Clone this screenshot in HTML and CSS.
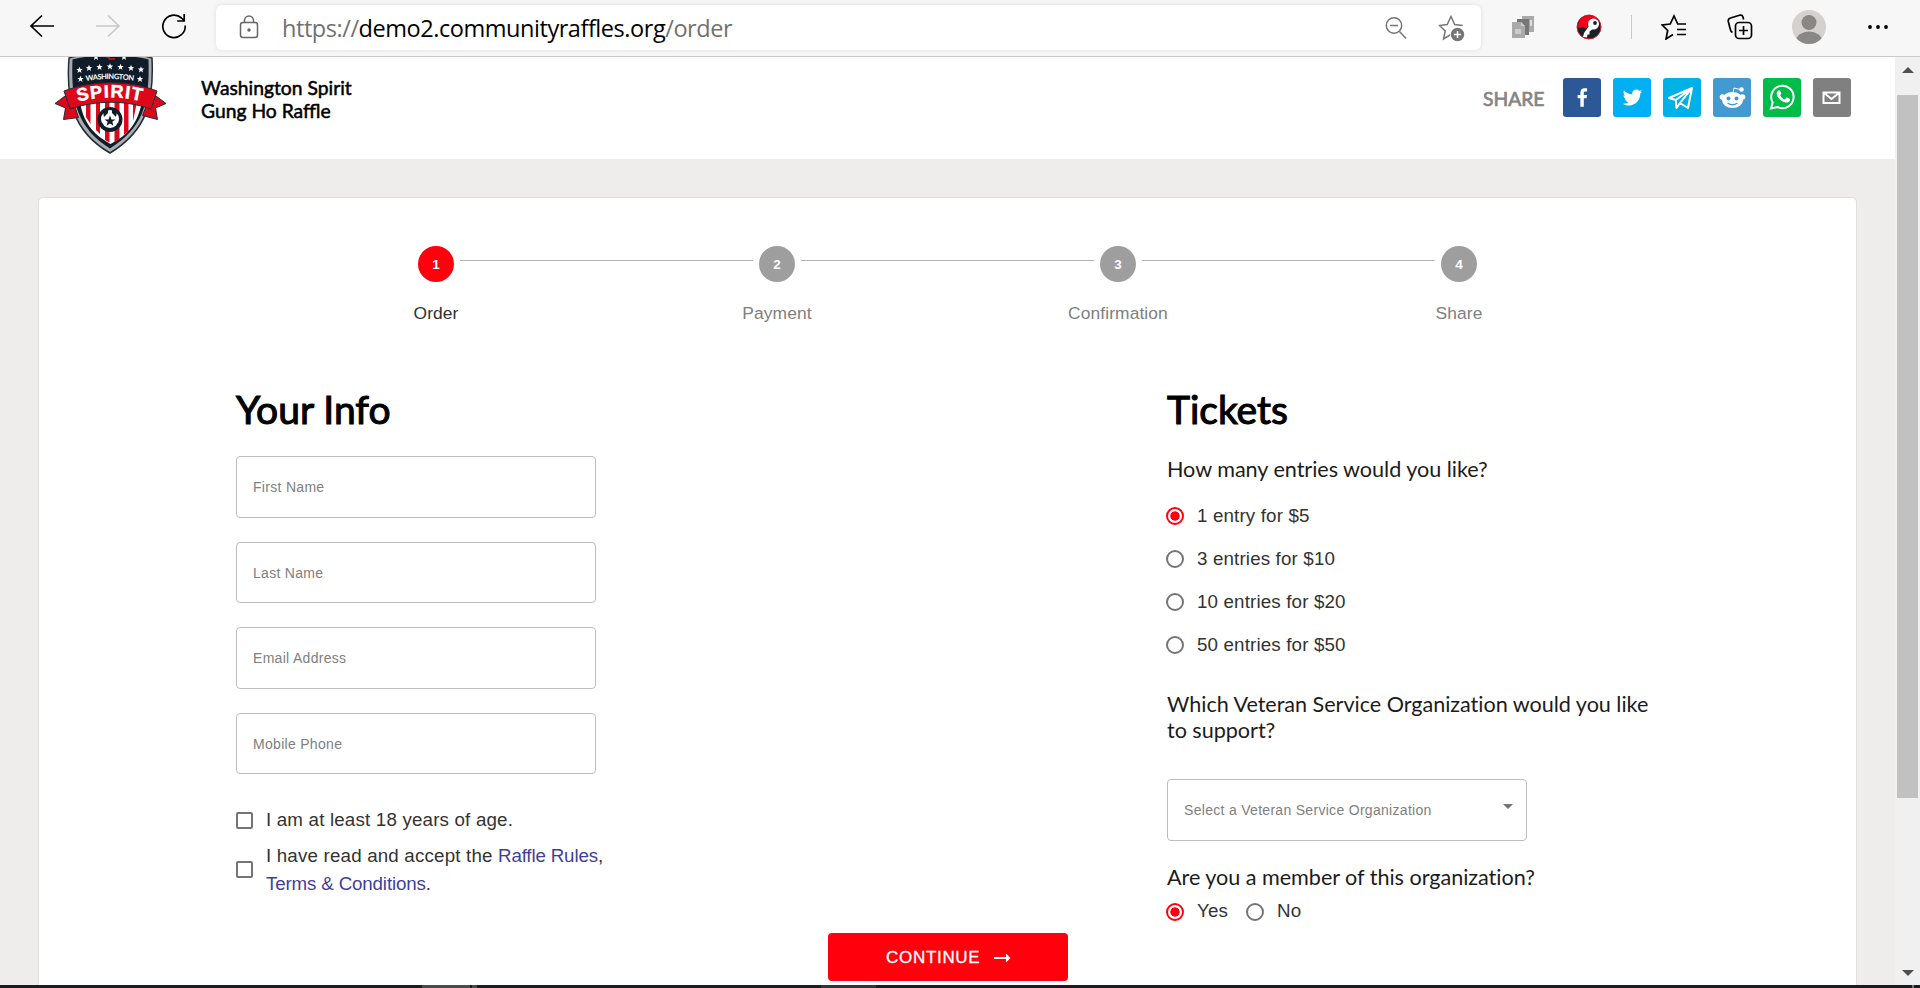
FILE: index.html
```html
<!DOCTYPE html>
<html lang="en">
<head>
<meta charset="utf-8">
<title>Washington Spirit Gung Ho Raffle</title>
<link rel="stylesheet" href="styles.css">
</head>
<body>
<div class="toolbar">
  <div class="nav">
    <svg width="26" height="26" viewBox="0 0 26 26" fill="none" stroke="#000" stroke-width="1.7"><path d="M25 13H2M13 2.5 2 13l11 10.5"/></svg>
    <svg width="26" height="26" viewBox="0 0 26 26" fill="none" stroke="#c9c9c9" stroke-width="1.7"><path d="M1 13h23M13 2.500 24 13 13 23.500"/></svg>
    <svg width="26" height="26" viewBox="0 0 26 26" fill="none" stroke="#000" stroke-width="1.7"><path d="M24.200 12.500A11.200 11.200 0 1 1 20.500 5L23 7.500M23.200 1v7h-7"/></svg>
  </div>
  <div class="address">
    <svg class="lock" width="20" height="24" viewBox="0 0 20 24" fill="none" stroke="#666" stroke-width="1.5"><rect x="1.500" y="7.500" width="17" height="15" rx="2.500"/><path d="M5.500 7.500V5.500a4.300 4.300 0 0 1 9 0v2"/><circle cx="10" cy="15" r="1" fill="#555"/></svg>
    <span class="url">https://<b>demo2.communityraffles.org</b>/order</span>
    <svg class="zoomout" width="22" height="24" viewBox="0 0 22 24" fill="none" stroke="#767676" stroke-width="1.500"><circle cx="9" cy="9.500" r="7.700"/><path d="M5 9.500h8M14.500 15.500l6.500 7"/></svg>
    <svg class="addfav" width="28" height="28" viewBox="0 0 28 28" fill="none" stroke="#767676" stroke-width="1.500"><path d="M12 21l-6.500 4 1.700-8L1.500 11.500l7.700-.9L13 2.500l3.700 8.100 8 1"/><circle cx="19.500" cy="20.500" r="6.700" fill="#767676" stroke="none"/><path d="M19.500 17v7M16 20.500h7" stroke="#fff"/></svg>
  </div>
  <div class="tools">
    <svg class="t1" width="22" height="24" viewBox="0 0 22 24"><path d="M10 1h12v16H10z" fill="#a9a9a9"/><path d="M5 4h12v16H5z" fill="#777"/><path d="M0 7h9l4 4v12H0z" fill="#aaa"/><path d="M9 7v4h4zM3 14h6v5H3z" fill="#ccc"/><path d="M18 5h2v6h-2z" fill="#ddd"/></svg>
    <svg class="t2" width="26" height="26" viewBox="0 0 26 26"><circle cx="13" cy="13" r="12" fill="#1b2226" stroke="#cf2038"/><path d="M2 12C3 5 8 1 14 1.500c4 0 6 2 8 4l-8-1 1 4-4 2 1 3-3 1-2-2-4 2z" fill="#fa0019"/><circle cx="17.500" cy="10" r="5.500" fill="#fff"/><path d="M13 12 8 19l-1 4 4 .5.500-3h2l0-3 4-3z" fill="#fff"/><circle cx="19" cy="9" r="1.900" fill="#1b2226"/></svg>
    <span class="sep"></span>
    <svg class="t3" width="26" height="26" viewBox="0 0 26 26" fill="none" stroke="#000" stroke-width="1.700"><path d="M12 20.500 5 25l1.700-8.500L1.200 11l8-1L13 2l3.500 7.500M16 10h9M16 15.500h9M16 20.500h9"/></svg>
    <svg class="t4" width="26" height="26" viewBox="0 0 26 26" fill="none" stroke="#000" stroke-width="1.700"><rect x="8.500" y="8.500" width="16" height="16" rx="3.500"/><path d="M16.500 12v9M12 16.500h9M5.500 18.500c-1.500-.500-2-2-2.300-3.500L1.300 7.500C1 5.500 1.700 4.500 3.500 4l9-2.700c2-.5 3 .2 3.500 1.700l.6 2.500"/></svg>
    <svg class="t5" width="34" height="34" viewBox="0 0 34 34"><defs><clipPath id="avatar"><circle cx="17" cy="17" r="17"/></clipPath></defs><g clip-path="url(#avatar)"><path d="M0 0h34v34H0z" fill="#d5d1ce"/><circle cx="17" cy="12.500" r="7.500" fill="#8b8784"/><ellipse cx="17" cy="31" rx="13" ry="9.500" fill="#8b8784"/></g></svg>
    <svg class="t6" width="20" height="6" viewBox="0 0 20 6"><circle cx="2" cy="3" r="1.900"/><circle cx="10" cy="3" r="1.900"/><circle cx="18" cy="3" r="1.900"/></svg>
  </div>
</div>
<div class="window">
  <div class="page">
    <div class="header">
      <svg class="logo" width="112" height="98" viewBox="0 0 112 98">
        <defs>
          <polygon id="star" points="0,-3.300 .9,-1 3.200,-1 1.400,.5 2,2.900 0,1.500 -2,2.900 -1.400,.5 -3.200,-1 -.9,-1" fill="#fff"/>
        </defs>
        <path d="M14 1C38-6 73-6 97 1c2 42-4 72-42 95C17 74 11 42 14 1z" fill="#a9acae" stroke="#232d38" stroke-width="1.500"/>
        <path d="M17.500 2.500C38-3 73-3 93.500 2.500c1 40-3 67-38.500 89C20 70 16 40 17.500 2.500z" fill="#101c29"/>
        <path d="M25 45h62C83 64 75 77 55.500 87 37 77 28 64 25 45z" fill="#fff"/>
        <path d="M31 45h4.500v22L31 60zM41 45h4v32l-4-4zM50 45h4.500v40.500L50 83zM59.500 45h5v37l-5 3zM69 45h4.500v29L69 78zM78 45h4l-4 19z" fill="#dc0719"/>
        <path d="M10 39 0 46.500l10.500 4.500-2 11.500 15-2-4-12zM101 39l10 7.500-10.500 4.500 2 11.500-15-4 4-10z" fill="#dc0719" stroke="#232d38"/>
        <path d="M9 34C38 23 74 23 102 34l-6 18C70 43 42 43 15 52z" fill="#dc0719" stroke="#232d38"/>
        <use href="#star" x="24.500" y="13"/><use href="#star" x="34" y="11"/><use href="#star" x="44.500" y="10"/><use href="#star" x="55" y="9.500"/><use href="#star" x="65.500" y="10"/><use href="#star" x="76" y="11"/><use href="#star" x="86" y="12.500"/>
        <use href="#star" x="25.500" y="22"/><use href="#star" x="85" y="22"/><use href="#star" x="41" y="0"/><use href="#star" x="69" y="0"/>
        <path d="M51 0h3v2h6" fill="none" stroke="#dc0719" stroke-width="1.500"/>
        <path id="arcSmall" d="M28 24.500Q55 19.500 83 24.500" fill="none"/>
        <path id="arcBig" d="M22 45Q55 36 90 45" fill="none"/>
        <text class="logo-small"><textPath href="#arcSmall" startOffset="3" textLength="48">WASHINGTON</textPath></text>
        <text class="logo-big"><textPath href="#arcBig" startOffset="1" textLength="64">SPIRIT</textPath></text>
        <circle cx="55" cy="62.500" r="12.500" fill="#101c29"/><circle cx="55" cy="62" r="9" fill="#fff"/>
        <path d="M55 58.500l1.500 4h4l-3.200 2.300 1.200 4-3.500-2.300-3.500 2.300 1.200-4-3.200-2.300h4zM48 55l5-3v4l-4 4zM62 55l-5-3v4l4 4zM47 66l3 4-4-2zM63 66l-3 4 4-2z" fill="#101c29"/>
      </svg>
      <div class="title">Washington Spirit<br>Gung Ho Raffle</div>
      <div class="share">
        <span class="share-label">SHARE</span>
        <span class="btn facebook"><svg viewBox="0 0 64 64"><path fill="#fff" d="M34.100 47V33.300h4.600l.7-5.300h-5.300v-3.400c0-1.500.4-2.600 2.600-2.600h2.800v-4.800c-.500-.1-2.200-.2-4.100-.2-4.100 0-6.900 2.500-6.900 7V28H24v5.300h4.500V47h5.600z"/></svg></span>
        <span class="btn twitter"><svg viewBox="0 0 64 64"><path fill="#fff" d="M48 22.100c-1.200.5-2.400.9-3.800 1 1.400-.8 2.400-2.100 2.900-3.600-1.300.8-2.700 1.300-4.200 1.600-1.200-1.300-2.900-2.100-4.800-2.100-3.600 0-6.600 2.900-6.600 6.600 0 .5.100 1 .2 1.500-5.500-.3-10.300-2.900-13.500-6.900-.6 1-.9 2.100-.9 3.300 0 2.300 1.200 4.300 2.900 5.500-1.100 0-2.100-.3-3-.8v.1c0 3.200 2.300 5.800 5.300 6.400-.6.100-1.100.2-1.700.2-.4 0-.8 0-1.200-.1.800 2.600 3.300 4.500 6.100 4.600-2.200 1.800-5.100 2.800-8.200 2.800-.5 0-1.100 0-1.600-.1 2.900 1.900 6.400 2.900 10.100 2.900 12.100 0 18.700-10 18.700-18.700v-.8c1.300-1 2.400-2.100 3.300-3.400z"/></svg></span>
        <span class="btn telegram"><svg viewBox="0 0 39 39" fill="none" stroke="#fff" stroke-width="2" stroke-linejoin="round"><path d="M6 20 29 10l-4 20-8-5-3.500 5-.7-8zM12.800 22 29 10 17 25M17 25l-3.500 5"/></svg></span>
        <span class="btn reddit"><svg viewBox="0 0 39 39"><g fill="#fff"><ellipse cx="19.500" cy="22" rx="10.500" ry="8"/><circle cx="9.500" cy="19" r="2.800"/><circle cx="29.500" cy="19" r="2.800"/><circle cx="28.500" cy="11.500" r="2.300"/></g><path d="M20 15l1-5 6 1.500" fill="none" stroke="#fff" stroke-width="1"/><circle cx="15.500" cy="20.500" r="2" fill="#429bd0"/><circle cx="23.500" cy="20.500" r="2" fill="#429bd0"/><path d="M14.500 25q5 3.500 10 0" fill="none" stroke="#429bd0" stroke-width="1.300"/></svg></span>
        <span class="btn whatsapp"><svg viewBox="0 0 39 39"><path d="M8 30.500 9.700 24.500A11.200 11.200 0 1 1 14.500 29z" fill="none" stroke="#fff" stroke-width="2"/><path d="M15.500 12.500c.7-.5 1.500-.3 1.800.5l1 2.300c.2.700-.7 1.400-1.100 2 1 2 2.500 3.400 4.600 4.200l1.400-1.700c.3-.4.7-.4 1.200-.2l2.500 1.300c.6.400-.1 2.500-1.200 3.100-2 1.100-4.400.4-6.700-1-2.800-1.800-5.300-4.700-5.300-7.500 0-1.200.8-2.400 1.800-3z" fill="#fff"/></svg></span>
        <span class="btn email"><svg viewBox="0 0 39 39" fill="none" stroke="#fff" stroke-width="2"><path d="M10.500 14.500h16v10.500h-16zM10.500 14.500l8 6.500 8-6.500"/></svg></span>
      </div>
    </div>
    <div class="card">
      <div class="stepper">
        <div class="step active"><div class="dot">1</div><div>Order</div></div>
        <div class="step"><div class="dot">2</div><div>Payment</div></div>
        <div class="step"><div class="dot">3</div><div>Confirmation</div></div>
        <div class="step"><div class="dot">4</div><div>Share</div></div>
      </div>
      <div class="columns">
        <div class="col info">
          <h2 class="h-info">Your Info</h2>
          <div class="fields">
            <div class="field">First Name</div>
            <div class="field">Last Name</div>
            <div class="field">Email Address</div>
            <div class="field">Mobile Phone</div>
          </div>
          <div class="check"><i class="box"></i><span>I am at least 18 years of age.</span></div>
          <div class="check two"><i class="box"></i><span>I have read and accept the <a>Raffle Rules</a>,<br><a>Terms &amp; Conditions</a>.</span></div>
        </div>
        <div class="col tickets">
          <h2>Tickets</h2>
          <p class="q q1">How many entries would you like?</p>
          <div class="options">
            <div class="option"><i class="radio on"></i>1 entry for $5</div>
            <div class="option"><i class="radio"></i>3 entries for $10</div>
            <div class="option"><i class="radio"></i>10 entries for $20</div>
            <div class="option"><i class="radio"></i>50 entries for $50</div>
          </div>
          <p class="q q2">Which Veteran Service Organization would you like<br>to support?</p>
          <div class="field select">Select a Veteran Service Organization<svg width="10" height="5" viewBox="0 0 10 5"><path d="M0 0h10L5 5z" fill="#757575"/></svg></div>
          <p class="q q3">Are you a member of this organization?</p>
          <div class="yesno"><i class="radio on"></i><span class="yes">Yes</span><i class="radio"></i><span>No</span></div>
        </div>
      </div>
      <div class="continue"><span>CONTINUE</span><svg width="17" height="10" viewBox="0 0 17 10"><path d="M0 4h12V.5L16.500 5 12 9.500V6H0z" fill="#fff"/></svg></div>
    </div>
  </div>
  <div class="scrollbar">
    <svg width="12" height="6" viewBox="0 0 12 6"><path d="M0 6 6 0l6 6z" fill="#505050"/></svg>
    <div class="thumb"></div>
    <svg class="down" width="12" height="6" viewBox="0 0 12 6"><path d="M0 0h12L6 6z" fill="#505050"/></svg>
  </div>
</div>
<div class="taskbar"><i class="task-a"></i><i class="task-b"></i><i class="task-c"></i><i class="task-d"></i></div>
</body>
</html>
```
FILE: styles.css
```css
* { box-sizing: border-box; }
body { margin: 0; width: 1920px; height: 988px; overflow: hidden; display: flex; flex-direction: column; background: #fff; font-family: "Liberation Sans", sans-serif; }
svg { display: block; flex: none; }
h2, p { margin: 0; }

.toolbar { height: 57px; flex: none; display: flex; background: #f7f7f7; border-bottom: 1px solid #cbcbcb; }
.nav { width: 216px; flex: none; display: flex; gap: 40px; padding: 13px 0 0 29px; }
.address { width: 1265px; height: 45px; flex: none; margin-top: 5px; display: flex; align-items: flex-start; background: #fff; border-radius: 6px; box-shadow: 0 0 5px rgba(0,0,0,.1); }
.lock { margin: 10px 0 0 23px; }
.url { width: 1110px; margin-left: 23px; padding-top: 1px; font: 23.500px/45px "Open Sans", sans-serif; letter-spacing: -.450px; color: #717171; white-space: nowrap; }
.url b { font-weight: 400; color: #000; }
.zoomout { margin: 11px 0 0 -7px; }
.addfav { margin: 9px 0 0 31px; }
.tools { flex: 1; display: flex; align-items: center; height: 54px; }
.t1 { margin-left: 31px; }
.t2 { margin-left: 42px; }
.sep { width: 1px; height: 24px; margin-left: 29px; background: #c9c9c9; }
.t3 { margin-left: 29px; }
.t4 { margin-left: 40px; }
.t5 { margin-left: 39px; }
.t6 { margin-left: 42px; }

.window { height: 928px; flex: none; display: flex; overflow: hidden; }
.page { width: 1895px; flex: none; background: #eeedeb; overflow: hidden; }
.header { height: 102px; display: flex; background: #fff; overflow: hidden; }
.logo { margin-left: 54.500px; }
.logo-small { font: bold 7.500px "Lato", sans-serif; fill: #fff; }
.logo-big { font: bold 18px "Liberation Sans", sans-serif; fill: #fff; stroke: #fff; stroke-width: .5px; }
.title { width: 400px; margin-left: 34.500px; padding-top: 19px; font: 19.300px/23px "Lato", sans-serif; color: #000; -webkit-text-stroke: .5px #000; }
.share { margin-left: auto; margin-right: 44px; padding-top: 21px; display: flex; gap: 12px; }
.share-label { width: 68px; font: 19.300px/41px "Lato", sans-serif; color: #858585; -webkit-text-stroke: .7px #858585; }
.btn { width: 38px; height: 39px; border-radius: 3px; overflow: hidden; }
.btn svg { width: 39px; height: 39px; }
.facebook { background: #2c5898; }
.twitter { background: #00b0f0; }
.telegram { background: #00b1e6; }
.reddit { background: #429bd0; }
.whatsapp { background: #00bd49; }
.email { background: #808080; }

.card { width: 1819px; height: 860px; margin: 38px 0 0 38px; padding-top: 48px; background: #fff; border: 1px solid #dfdfdf; border-radius: 5px; }
.stepper { width: 1364px; margin: 0 auto; display: grid; grid-template-columns: repeat(4, 341px); font-size: 17.400px; color: #808080; letter-spacing: .1px; text-align: center; }
.step { position: relative; height: 76px; line-height: 20px; }
.step.active { color: #303030; }
.step + .step::before { content: ""; position: absolute; left: -147px; top: 14px; width: 293px; height: 1px; background: #b5b5b5; }
.dot { width: 36px; height: 36px; margin: 0 auto 21px; border-radius: 50%; background: #9e9e9e; color: #fff; font: bold 13.500px/37px "Liberation Sans", sans-serif; }
.active .dot { background: #ff000c; }

.columns { height: 611px; padding-left: 197px; display: flex; }
.info { width: 931px; }
.tickets { width: 520px; }
h2 { padding-top: 64px; font: 39px/47px "Lato", sans-serif; color: #000; -webkit-text-stroke: 1.100px #000; height: 134px; }
.fields { display: flex; flex-direction: column; gap: 24px; }
.field { width: 360px; height: 61.500px; padding-left: 16px; border: 1px solid #bdbdbd; border-radius: 4px; font-size: 14px; line-height: 60px; letter-spacing: .3px; color: #808080; }
.check { display: flex; align-items: center; margin-top: 32px; font-size: 18.750px; line-height: 28px; letter-spacing: .176px; color: #333; white-space: nowrap; }
.check.two { margin-top: 7.500px; }
.box { width: 17px; height: 17px; margin: 0 13px 0 0; border: 2px solid #757575; border-radius: 2px; }
.check a { color: #3f3f99; letter-spacing: -.160px; }
.q { font: 21.600px/26.300px "Lato", sans-serif; letter-spacing: -.030px; color: #1c1c1c; white-space: nowrap; }
.q1 { height: 38px; }
.option { height: 43px; display: flex; align-items: center; font-size: 18.750px; letter-spacing: .15px; color: #333; }
.radio { flex: none; width: 18px; height: 18px; margin: 0 13px 0 -1px; border: 2px solid #757575; border-radius: 50%; }
.radio.on { border-color: #ff000c; background: radial-gradient(circle, #ff000c 4.300px, #fff 5px); }
.q2 { margin-top: 25px; height: 88px; }
.select { display: flex; justify-content: space-between; padding-right: 13px; height: 62px; }
.select svg { margin-top: 24px; }
.q3 { margin-top: 23px; height: 39px; }
.yesno { display: flex; align-items: center; font-size: 18.750px; line-height: 20px; letter-spacing: .15px; color: #333; }
.yesno span { margin-top: -2px; }
.yes { width: 50px; }
.continue { width: 240px; height: 48px; margin: 0 auto; display: flex; align-items: center; gap: 14px; padding: 1px 0 0 58.500px; background: #ff000c; border-radius: 4px; color: #fff; font-size: 17px; font-weight: 400; letter-spacing: .700px; -webkit-text-stroke: .3px #fff; }

.scrollbar { width: 25px; padding-top: 10px; background: #f0f0f0; display: flex; flex-direction: column; align-items: center; }
.thumb { width: 21px; height: 703px; margin-top: 22px; background: #c1c1c1; }
.down { margin-top: 172px; }
.taskbar { height: 3px; display: flex; background: #1a1d1d; }
.task-a { width: 48px; margin-left: 422px; background: #4a4c4c; }
.task-b { width: 5px; margin-left: 2px; background: #4a4c4c; }
.task-c { width: 55px; margin-left: 344px; background: #333535; }
.task-d { width: 2px; margin-left: auto; margin-right: 6px; background: #777; }
```
